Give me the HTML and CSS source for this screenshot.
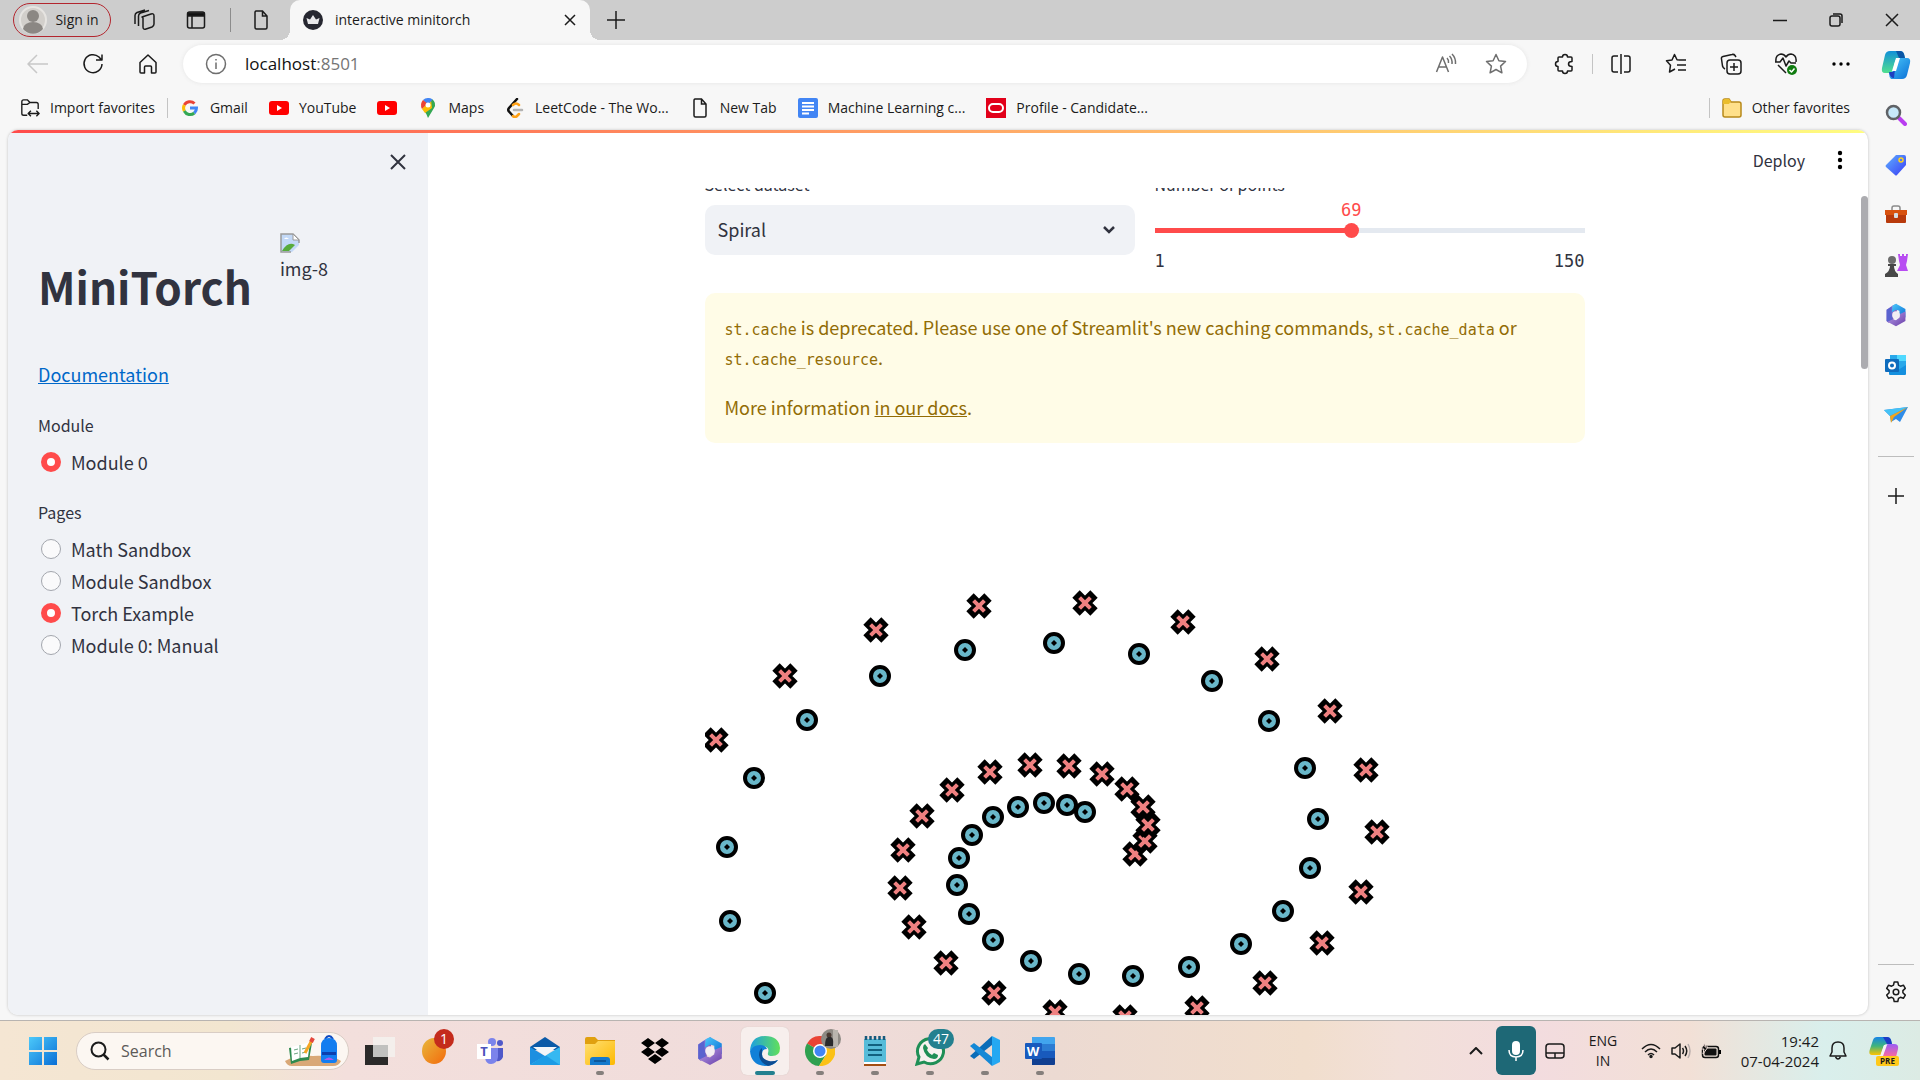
FILE: index.html
```html
<!DOCTYPE html>
<html lang="en">
<head>
<meta charset="utf-8">
<title>interactive minitorch</title>
<link rel="stylesheet" href="styles.css">
</head>
<body>
<svg class="defs" aria-hidden="true">
  <defs>
    <linearGradient id="gBlue" x1="0" y1="0" x2="1" y2="1"><stop offset="0" stop-color="#4cc9fa"/><stop offset="1" stop-color="#0a6fd6"/></linearGradient>
    <linearGradient id="gTag" x1="0" y1="0" x2="1" y2="1"><stop offset="0" stop-color="#5fb0ff"/><stop offset="1" stop-color="#3a3df5"/></linearGradient>
    <linearGradient id="gTeal" x1="0" y1="0" x2="0" y2="1"><stop offset="0" stop-color="#1190d8"/><stop offset="1" stop-color="#52e08f"/></linearGradient>
    <linearGradient id="gPurple" x1="0" y1="0" x2="1" y2="1"><stop offset="0" stop-color="#b9a2ee"/><stop offset="1" stop-color="#6a3fa8"/></linearGradient>
    <linearGradient id="gEdge" x1="0" y1="0" x2="1" y2="0"><stop offset="0" stop-color="#1c9fe0"/><stop offset="1" stop-color="#62e05a"/></linearGradient>
    <linearGradient id="gFolder" x1="0" y1="0" x2="1" y2="1"><stop offset="0" stop-color="#ffdf73"/><stop offset="1" stop-color="#fdb900"/></linearGradient>
    <linearGradient id="gOrange" x1="0" y1="0" x2="1" y2="1"><stop offset="0" stop-color="#e8b83c"/><stop offset="1" stop-color="#f36a0c"/></linearGradient>
    <linearGradient id="gPink" x1="0" y1="0" x2="0" y2="1"><stop offset="0" stop-color="#9a5cf5"/><stop offset="1" stop-color="#ff6a9a"/></linearGradient>
    <linearGradient id="gRainbow" x1="0" y1="0" x2="0" y2="1"><stop offset="0" stop-color="#1583e8"/><stop offset=".5" stop-color="#3fb47c"/><stop offset="1" stop-color="#ffc400"/></linearGradient>
    <symbol id="page" viewBox="0 0 20 20"><path d="M5 1h6.500l4.500 5v11.500a1.500 1.500 0 0 1-1.500 1.500h-9A1.500 1.500 0 0 1 4 17.500v-15A1.500 1.500 0 0 1 5 1zM11.500 1v5H16" fill="none" stroke="#1b1b1b" stroke-width="1.500"/></symbol>
    <symbol id="yt" viewBox="0 0 20 20"><rect y="3" width="20" height="14" rx="3" fill="#f00"/><path d="M8 7l5 3-5 3z" fill="#fff"/></symbol>
    <symbol id="m365" viewBox="0 0 28 28"><path d="M10 3l5-2v9l-4 3v8l-6 2-2-2V8z" fill="url(#gPurple)"/><path d="M14 1l11 6v10l-7-4V9l-4-1-5 3 1-8z" fill="url(#gBlue)"/><path d="M25 15v6l-11 6-10-5 6-3 4 1 4-3v-4l7-3z" fill="url(#gPurple)"/><path d="M3 8l6-4v8l1 7-6 3-1-1z" fill="#5a63cf"/><circle cx="14" cy="14" r="4.500" fill="#f3eef3"/></symbol>
  </defs>
</svg>

<header class="tabstrip">
  <button class="signin"><svg width="28" height="28" viewBox="0 0 28 28"><circle cx="14" cy="14" r="13" fill="#d2cfcb" stroke="#e6e4e1" stroke-width="2"/><circle cx="14" cy="10" r="6" fill="#8b8783"/><path d="M4 23a10 7 0 0 1 20 0 13 13 0 0 1-20 0z" fill="#8b8783"/></svg>Sign in</button>
  <button class="strip-btn" aria-label="Workspaces"><svg class="ico" width="22" height="22" viewBox="0 0 22 22"><path d="M9 8l9-3q3-1 3 2v8q0 2-2 3l-6 2q-3 1-3-2V9zM5.500 17V7q0-2 2-3L16 1.500M2 15V6.500q0-2 2-3L12 1" /></svg></button>
  <button class="strip-btn" aria-label="Tab actions"><svg class="ico" width="20" height="20" viewBox="0 0 20 20"><rect x="1.500" y="2" width="17" height="16" rx="2"/><path d="M2 3h16v3H2z" fill="#111"/><path d="M6 6v12"/></svg></button>
  <span class="vline strip-sep"></span>
  <button class="strip-btn page-tab" aria-label="New Tab page"><svg width="20" height="22"><use href="#page"/></svg></button>
  <div class="tab">
    <svg width="22" height="22" viewBox="0 0 22 22"><circle cx="11" cy="11" r="10" fill="#262730"/><path d="M4.500 9l3.500 1.500L11 6l3 4.500L17.500 9 16 15H6z" fill="#e8e8ea"/></svg>
    <span class="tab-title">interactive minitorch</span>
    <button aria-label="Close tab"><svg class="ico" width="12" height="12" viewBox="0 0 12 12"><path d="M1 1l10 10M11 1L1 11"/></svg></button>
  </div>
  <button class="strip-btn" aria-label="New tab"><svg class="ico" width="18" height="18" viewBox="0 0 18 18"><path d="M9 0v18M0 9h18"/></svg></button>
  <div class="window-btns">
    <button aria-label="Minimize"><svg class="ico" width="14" height="14" viewBox="0 0 14 14"><path d="M0 7.500h14"/></svg></button>
    <button aria-label="Restore"><svg class="ico" width="14" height="14" viewBox="0 0 14 14"><rect x="1" y="3" width="10" height="10" rx="2"/><path d="M4 1h7q2 0 2 2v7"/></svg></button>
    <button aria-label="Close"><svg class="ico" width="14" height="14" viewBox="0 0 14 14"><path d="M1 1l12 12M13 1L1 13"/></svg></button>
  </div>
</header>

<div class="browser">
  <div class="window">
    <nav class="toolbar" aria-label="Navigation">
      <button class="tool dim" aria-label="Back"><svg class="ico" width="22" height="20" viewBox="0 0 22 20"><path d="M21 10H1M10 1l-9 9 9 9"/></svg></button>
      <button class="tool" aria-label="Refresh"><svg class="ico" width="22" height="22" viewBox="0 0 22 22"><path d="M20 11a9 9 0 1 1-3-7l2.500 3M20 1.500V7h-6"/></svg></button>
      <button class="tool" aria-label="Home"><svg class="ico" width="20" height="22" viewBox="0 0 20 22"><path d="M2 9.500L10 2l8 7.500V19q0 1-1 1h-3.500v-6q0-1-1-1h-5q-1 0-1 1v6H3q-1 0-1-1z"/></svg></button>
      <div class="address">
        <svg class="ico grey" width="22" height="22" viewBox="0 0 22 22"><circle cx="11" cy="11" r="9.500"/><path d="M11 9.500V16M11 6v1.500"/></svg>
        <label class="url"><span class="host">localhost</span>:8501<input type="text" aria-label="Address"></label>
        <button class="tool grey" aria-label="Read aloud"><svg class="ico" width="22" height="22" viewBox="0 0 22 22"><path d="M1.500 19L7.500 4l6 15M3.500 14h8M12 5q2 2 1.500 5M14.500 3q3 3 2.500 8M17 1q4 4 3.500 10"/></svg></button>
        <button class="tool grey" aria-label="Add to favorites"><svg class="ico" width="22" height="22" viewBox="0 0 22 22"><path d="M11 1.500l2.900 6.200 6.600.8-4.900 4.600 1.300 6.700L11 16.500l-5.900 3.300 1.300-6.700L1.500 8.500l6.600-.8z"/></svg></button>
      </div>
      <button class="tool" aria-label="Extensions"><svg class="ico" width="22" height="22" viewBox="0 0 22 22"><path d="M5 4h3.500q0-2.500 2.500-2.500T13.500 4H17q1 0 1 1v3.500q-3.500 0-3.500 2.500t3.500 2.500V17q0 1-1 1h-3.500q0 2.500-2.500 2.500T8.500 18H5q-1 0-1-1v-3.500q-2.500 0-2.500-2.500T4 8.500V5q0-1 1-1z"/></svg></button>
      <span class="vline"></span>
      <button class="tool" aria-label="Split screen"><svg class="ico" width="22" height="22" viewBox="0 0 22 22"><path d="M8 3H4Q2 3 2 5v12q0 2 2 2h4M14 3h4q2 0 2 2v12q0 2-2 2h-4M11 1v20"/></svg></button>
      <button class="tool" aria-label="Favorites"><svg class="ico" width="22" height="22" viewBox="0 0 22 22"><path d="M14 7l-2-.3L9.500 1.500 7 7l-5.500.8 4 4.400-1 6.800L10 16M14 7h7M12 12h9M13 17h8"/></svg></button>
      <button class="tool" aria-label="Collections"><svg class="ico" width="22" height="22" viewBox="0 0 22 22"><rect x="7" y="7" width="14" height="14" rx="3"/><path d="M14 10v8M10 14h8M5 16q-2-1-2.500-3L1.500 6q-.5-2 1.500-2.500l9-2q2-.5 3 1L16 4"/></svg></button>
      <button class="tool" aria-label="Browser essentials"><svg class="ico" width="24" height="24" viewBox="0 0 24 24"><path d="M2 10q-1-7 5-8 3 0 5 3 2-3 5-3 6 1 5 8M1 10h5l3-4 3 8 3-5 2 2h5M4 13l8 8"/><circle cx="18" cy="18" r="5" fill="#107c10" stroke="none"/><path d="M15.500 18l2 2 3-3.500" stroke="#fff"/></svg></button>
      <button class="tool" aria-label="Settings and more"><svg width="18" height="4" viewBox="0 0 18 4"><circle cx="2" cy="2" r="1.700"/><circle cx="9" cy="2" r="1.700"/><circle cx="16" cy="2" r="1.700"/></svg></button>
    </nav>

    <nav class="favorites" aria-label="Favorites bar">
      <button><svg class="ico" width="20" height="22" viewBox="0 0 22 22"><path d="M8 19H4q-2 0-2-2V4q0-2 2-2h4l3 3h7q2 0 2 2v5M2 7h6l3-2M9 17h12M12 14l-3 3 3 3M18 14l3 3-3 3"/></svg>Import favorites</button>
      <span class="vline"></span>
      <a href="#"><svg width="20" height="20" viewBox="0 0 20 20"><g fill="none" stroke-width="3"><path d="M14.500 5.500A6.500 6.500 0 0 0 4.300 7" stroke="#ea4335"/><path d="M4.300 7a6.500 6.500 0 0 0 0 6" stroke="#fbbc05"/><path d="M4.300 13a6.500 6.500 0 0 0 10 2" stroke="#34a853"/><path d="M14.300 15a6.500 6.500 0 0 0 2.200-5H10" stroke="#4285f4"/></g></svg>Gmail</a>
      <a href="#"><svg width="20" height="20"><use href="#yt"/></svg>YouTube</a>
      <a href="#" aria-label="YouTube"><svg width="20" height="20"><use href="#yt"/></svg></a>
      <a href="#"><svg width="20" height="20" viewBox="0 0 20 20"><path d="M10 0a7 7 0 0 0-5 2l5 5 4-6z" fill="#4285f4"/><path d="M5 2Q1.500 6 4 11l6-5z" fill="#ea4335"/><path d="M14 1q5 4 2 9L10 20q-1-4-4-7z" fill="#34a853"/><path d="M4 11l9-9 1 8-7 5z" fill="#fbbc04"/><path d="M10 0q3 0 4.500 1.500L10 7z" fill="#4285f4"/><circle cx="10" cy="7" r="2.500" fill="#fff"/></svg>Maps</a>
      <a href="#"><svg width="20" height="20" viewBox="0 0 20 20" fill="none" stroke-width="2.500" stroke-linecap="round"><path d="M12 1L4 10q-1.500 2 0 3.500L8 18" stroke="#111"/><path d="M8 18q2 2 4 0l2-2M8 7q3-3 6 0" stroke="#ffa116"/><path d="M9 12h8" stroke="#b3b3b3"/></svg>LeetCode - The Wo...</a>
      <a href="#"><svg width="20" height="20"><use href="#page"/></svg>New Tab</a>
      <a href="#"><svg width="20" height="20" viewBox="0 0 20 20"><rect width="20" height="20" rx="2" fill="#4285f4"/><path d="M4 5h12M4 8.500h12M4 12h12M4 15.500h7" stroke="#fff" stroke-width="2"/></svg>Machine Learning c...</a>
      <a href="#"><svg width="20" height="20" viewBox="0 0 20 20"><rect width="20" height="20" fill="#e2001a"/><rect x="3" y="6" width="14" height="8" rx="4" fill="none" stroke="#fff" stroke-width="2"/></svg>Profile - Candidate...</a>
      <span class="vline push"></span>
      <button><svg width="20" height="20" viewBox="0 0 20 20"><path d="M1 5V3q0-2 2-2h4l2 3h8q2 0 2 2v11q0 2-2 2H3q-2 0-2-2z" fill="#ffe08a" stroke="#b8891a" stroke-width="1.500"/><path d="M1 5V3q0-2 2-2h4l2 2-2 3H1z" fill="#eabd2c"/></svg>Other favorites</button>
    </nav>

    <div class="frame">
      <div class="decoration"></div>
      <div class="app">
        <aside class="sidebar">
          <div class="sidebar-head"><button aria-label="Close sidebar"><svg class="ico" width="16" height="16" viewBox="0 0 16 16"><path d="M1 1l14 14M15 1L1 15" stroke-width="2"/></svg></button></div>
          <div class="brand">
            <h1>MiniTorch</h1>
            <figure>
              <svg width="20" height="20" viewBox="0 0 20 20"><path d="M1 1h12l6 6v12H1z" fill="#c3d9f7"/><path d="M2 18q6-10 13-6l-6 6z" fill="#57ab3b"/><path d="M4 6q2-3 5 0z" fill="#fff"/><path d="M11 20l9-9v9z" fill="#f0f2f6"/><path d="M19 10V7l-6-6H1v18h10" fill="none" stroke="#9a9a9a" stroke-width="1.500"/><path d="M13 1v6h6z" fill="#fff" stroke="#9a9a9a"/></svg>
              <figcaption>img-8</figcaption>
            </figure>
          </div>
          <a class="docs" href="#">Documentation</a>
          <fieldset>
            <legend>Module</legend>
            <label><input type="radio" name="module" checked>Module 0</label>
          </fieldset>
          <fieldset>
            <legend>Pages</legend>
            <label><input type="radio" name="page">Math Sandbox</label>
            <label><input type="radio" name="page">Module Sandbox</label>
            <label><input type="radio" name="page" checked>Torch Example</label>
            <label><input type="radio" name="page">Module 0: Manual</label>
          </fieldset>
        </aside>

        <div class="view">
          <header class="app-head">
            <button>Deploy</button>
            <button aria-label="Main menu"><svg width="6" height="20" viewBox="0 0 6 20"><circle cx="3" cy="3" r="2.200"/><circle cx="3" cy="10" r="2.200"/><circle cx="3" cy="17" r="2.200"/></svg></button>
          </header>
          <div class="scroller">
            <main>
              <div class="controls">
                <div>
                  <label class="field-label" for="dataset">Select dataset</label>
                  <div class="select">
                    <select id="dataset"><option>Spiral</option></select>
                    <svg class="chev" width="14" height="10" viewBox="0 0 14 10"><path d="M2 2l5 5 5-5"/></svg>
                  </div>
                </div>
                <div>
                  <label class="field-label" for="points">Number of points</label>
                  <div class="slider">
                    <output for="points" style="left: 46%">69</output>
                    <input id="points" type="range" min="1" max="150" value="69">
                  </div>
                  <div class="limits"><span>1</span><span>150</span></div>
                </div>
              </div>
              <div class="alert" role="alert">
                <p><code>st.cache</code> is deprecated. Please use one of Streamlit's new caching commands, <code>st.cache_data</code> or <code>st.cache_resource</code>.</p>
                <p>More information <a href="#">in our docs</a>.</p>
              </div>
              <svg class="plot" role="img" aria-label="Spiral dataset">
                <defs>
                  <marker id="dot" class="mark" markerUnits="userSpaceOnUse" markerWidth="26" markerHeight="26"><circle r="9" fill="#69b7c9" stroke="#000" stroke-width="4"/><path d="M-3 0l3-3 3 3-3 3z"/></marker>
                  <marker id="cross" class="mark" markerUnits="userSpaceOnUse" markerWidth="26" markerHeight="26"><path d="M-9-9L9 9M9-9L-9 9" stroke="#000" stroke-width="10.400"/><path d="M-5.400-5.400l10.800 10.800M5.400-5.400L-5.400 5.400" stroke="#ef8080" stroke-width="4"/></marker>
                </defs>
                <polyline class="dots" points="380,352 362,345 339,343 313,347 288,357 267,375 254,398 252,425 264,454 288,480 326,501 374,514 428,516 484,507 536,484 578,451 605,408 613,359 600,308 564,261 507,221 434,194 349,183 260,190 175,216 102,260 49,318 22,387 25,461 60,533"/>
                <polyline class="crosses" points="430,394 440,381 443,365 438,347 422,329 397,314 364,306 325,305 285,312 247,330 217,356 198,390 195,428 209,467 241,503 289,533 350,552 420,557 492,548 560,523 617,483 656,432 672,372 661,310 625,251 562,199 478,162 380,143 274,146 171,170 80,216 11,280"/>
              </svg>
            </main>
            <div class="thumb"></div>
          </div>
        </div>
      </div>
    </div>
  </div>

  <aside class="rail" aria-label="Edge sidebar">
    <button aria-label="Copilot"><svg width="30" height="30" viewBox="0 0 30 30"><path d="M9 1h10q3 0 4 3l1 4h-6q-3 0-4 4l-2 8q-1 3-4 3H4q-4 0-3-5L4 5q1-4 5-4z" fill="url(#gTeal)"/><path d="M15 1h4q3 0 4 3l1 4h-6z" fill="#0a56a6"/><path d="M21 29H10q-2-2-2-6 3 0 4-3l3-9q1-3 4-3h7q4 0 3 5l-3 12q-1 4-5 4z" fill="url(#gBlue)"/><path d="M8 22h4l2-3-1 9q-4 0-5-6z" fill="#1d3fc0"/><path d="M15 8h4l-4 13h-4z" fill="#fff"/></svg></button>
    <button aria-label="Search"><svg width="22" height="22" viewBox="0 0 22 22"><path d="M14 14l6 6" stroke="#b93df0" stroke-width="4" stroke-linecap="round"/><circle cx="8.500" cy="8.500" r="6.500" fill="#c6e8fa" stroke="#5f6266" stroke-width="2.500"/></svg></button>
    <button aria-label="Shopping"><svg width="22" height="22" viewBox="0 0 22 22"><path d="M11 1l8 0q2 0 2 2v8L12 21q-1 1-2 0l-9-8q-1-1 0-2z" fill="url(#gTag)"/><circle cx="16" cy="6" r="2" fill="none" stroke="#ffd21e" stroke-width="1.500"/></svg></button>
    <button aria-label="Tools"><svg width="24" height="20" viewBox="0 0 24 20"><path d="M8 5V3q0-2 2-2h4q2 0 2 2v2" fill="none" stroke="#8b8b8b" stroke-width="1.500"/><path d="M1 5h22v5H1z" fill="#d8520f"/><path d="M2 10h20v7q0 1-1 1H3q-1 0-1-1z" fill="#b83a0c"/><rect x="10" y="8" width="4" height="5" rx="1" fill="#d6dde3"/></svg></button>
    <button aria-label="Games"><svg width="24" height="24" viewBox="0 0 24 24"><path d="M14 1h2v2h2V1h2v2h2V1h2l-1 7-1 4 2 6H13l3-6-1-4z" fill="#b84df2"/><circle cx="8" cy="7" r="4" fill="#6c6c6c"/><path d="M4 11h8v2h-2q0 5 4 8v3H1v-3q5-3 5-8H4z" fill="#484848"/></svg></button>
    <button aria-label="Microsoft 365"><svg width="24" height="24"><use href="#m365"/></svg></button>
    <button aria-label="Outlook"><svg width="22" height="22" viewBox="0 0 22 22"><path d="M5 1h15q1 0 1 1v11L5 21z" fill="#28a8ea"/><path d="M12 1h9v6h-9z" fill="#50d9ff"/><path d="M4 12l9 4 8-5v9q0 1-1 1H5q-1 0-1-1z" fill="#1490df"/><rect y="5" width="14" height="13" rx="1" fill="#0f6cbd"/><circle cx="7" cy="11.500" r="3" fill="none" stroke="#fff" stroke-width="2"/></svg></button>
    <button aria-label="Drop"><svg width="24" height="18" viewBox="0 0 24 18"><path d="M0 4l24-3-8 15-4-3-5 3-1-6z" fill="#2f8ce8"/><path d="M0 4l24-3L6 10z" fill="#45c2f5"/><path d="M6 10l18-9L10 11l-3 6z" fill="#f2a51d"/></svg></button>
    <span class="hline"></span>
    <button aria-label="Customize"><svg class="ico" width="16" height="16" viewBox="0 0 16 16"><path d="M8 0v16M0 8h16"/></svg></button>
    <span class="hline low"></span>
    <button aria-label="Sidebar settings"><svg class="ico" width="22" height="22" viewBox="0 0 22 22"><path d="M9.200 1h3.600l.7 3.100 1.900 1.100 3-1 1.900 3.200-2.400 2.200v2.200l2.400 2.300-1.900 3.200-3-1-1.900 1.100-.7 3.100H9.200l-.7-3.100-1.900-1.100-3 1-1.900-3.200 2.400-2.300V9.600L1.700 7.400l1.900-3.200 3 1 1.900-1.100z"/><circle cx="11" cy="11" r="2.800"/></svg></button>
  </aside>
</div>

<footer class="taskbar">
  <button class="start" aria-label="Start"><svg width="30" height="30" viewBox="0 0 30 30"><path d="M1 1h13v13H1zM16 1h13v13H16zM1 16h13v13H1zM16 16h13v13H16z" fill="url(#gBlue)"/></svg></button>
  <label class="search">
    <svg class="ico" width="20" height="20" viewBox="0 0 20 20"><circle cx="8.500" cy="8.500" r="7" stroke-width="2"/><path d="M13.500 13.500l5 5" stroke-width="2.500"/></svg>
    <input type="text" placeholder="Search">
    <svg width="58" height="32" viewBox="0 0 58 32"><path d="M1 26q10-6 28-5 20-1 28 5-2 5-8 5H8q-5 0-7-5z" fill="#d9a877"/><path d="M5 13l11-2 12-3-3 17-9 1-9 3z" fill="#2d8a4e"/><path d="M7 12l9-2 10-3-2 15-8 1-8 3z" fill="#fff"/><path d="M16 10v13M10 15l4-1M10 19l4-1M18 14l4-1M18 18l4-1" stroke="#6aa580"/><path d="M21 18l7-13" stroke="#f5a623" stroke-width="3"/><path d="M27 7l2-4" stroke="#e5483d" stroke-width="4"/><path d="M41 4q4-6 8 0" fill="none" stroke="#104ac0" stroke-width="2"/><path d="M37 11q0-8 8-8t8 8v14q0 3-3 3H40q-3 0-3-3z" fill="#137df0"/><path d="M38 17h14v3H38z" fill="#0d3fae"/><path d="M40 25q5-5 10 0z" fill="#a85cf0"/></svg>
  </label>
  <div class="apps">
    <button aria-label="Task view"><svg width="30" height="30" viewBox="0 0 30 30"><rect y="9" width="23" height="20" fill="#2b2a29"/><rect x="8" y="1" width="22" height="20" fill="#f4f4f2" opacity=".75"/></svg></button>
    <button aria-label="Widgets"><svg width="30" height="30" viewBox="0 0 30 30"><ellipse cx="14" cy="15" rx="12" ry="13" fill="url(#gOrange)"/></svg><span class="count red">1</span></button>
    <button aria-label="Teams"><svg width="28" height="28" viewBox="0 0 28 28"><circle cx="16" cy="5" r="4" fill="#7b83eb"/><circle cx="24" cy="6" r="3" fill="#5059c9"/><path d="M20 11h7v9q-2 5-7 4z" fill="#5059c9"/><path d="M9 11h13v9q-1 7-7 7-5 0-6-6z" fill="#7b83eb"/><rect x="1" y="7" width="14" height="15" fill="#fff"/><text x="8" y="19" class="glyph" fill="#4b53bc">T</text></svg></button>
    <button aria-label="Mail"><svg width="30" height="30" viewBox="0 0 30 30"><path d="M0 11L15 1l15 10v3H0z" fill="#0a5aa8"/><path d="M0 11l15 9L0 29z" fill="#1c8fe0"/><path d="M30 11v18H0l18-11z" fill="#35b8f1"/><path d="M15 19l15 10H0z" fill="#1d9ce5"/><path d="M3 11h24l-12 9z" fill="#f3f6f9"/></svg></button>
    <button class="open" aria-label="File Explorer"><svg width="30" height="28" viewBox="0 0 30 28"><path d="M0 2q0-2 2-2h8l3 3h17v10H0z" fill="#e0a00f"/><path d="M0 7h10l3-3h17v22q0 2-2 2H2q-2 0-2-2z" fill="url(#gFolder)"/><path d="M5 28v-5q0-3 3-3h14q3 0 3 3v5z" fill="#1479cc"/><path d="M9 24h12" stroke="#0a4d8c" stroke-width="1.500"/></svg></button>
    <button aria-label="Dropbox"><svg width="30" height="26" viewBox="0 0 30 26"><path d="M8 0l7 5-7 5-7-5zM22 0l7 5-7 5-7-5zM8 9l7 5-7 5-7-5zM22 9l7 5-7 5-7-5zM15 16l7 5-7 5-7-5z"/></svg></button>
    <button aria-label="Microsoft 365"><svg width="30" height="30"><use href="#m365"/></svg></button>
    <button class="open active" aria-label="Microsoft Edge"><svg width="30" height="30" viewBox="0 0 30 30"><path d="M0 15Q1 0 15 0q14 0 15 12 0 8-8 8-5 0-4-3 2-6-5-7-9 0-13 5z" fill="url(#gEdge)"/><path d="M0 15q3-6 10-6 6 0 7 4-5 0-5 5 0 8 8 8 4 0 8-2-4 6-13 6Q1 29 0 15z" fill="#1180d8"/><path d="M12 12q-3 2-3 7 1 8 9 11 6-1 10-6-5 2-9 1-8-2-7-8z" fill="#0c4c92"/></svg></button>
    <button class="open" aria-label="Google Chrome"><svg width="30" height="30" viewBox="0 0 30 30"><path d="M15 15L2 7.500A15 15 0 0 1 28 7.500L28 9H15z" fill="#ea4335"/><path d="M15 15L2 7.500a15 15 0 0 0 12 22.500l7-11z" fill="#2fa04f"/><path d="M15 8h13.500A15 15 0 0 1 14 30l7-11z" fill="#fbc116"/><circle cx="15" cy="15" r="7" fill="#fff"/><circle cx="15" cy="15" r="5.500" fill="#4285f4"/></svg><svg class="profile" width="20" height="20" viewBox="0 0 20 20"><circle cx="10" cy="10" r="10" fill="#8e8a84"/><path d="M12 1h5v17h-5z" fill="#b9b5ae"/><circle cx="8" cy="6" r="2.500" fill="#4a3a33"/><path d="M4 17q0-8 3-9h3q3 1 2 9z" fill="#2a2a2c"/></svg></button>
    <button class="open" aria-label="Notepad"><svg width="24" height="30" viewBox="0 0 24 30"><rect x="1" y="3" width="22" height="24" fill="#56bcd9"/><path d="M3 0v4M7.500 0v4M12 0v4M16.500 0v4M21 0v4" stroke="#175a7c" stroke-width="2.500"/><path d="M5 9h14M5 14h14M5 19h14" stroke="#12617f" stroke-width="2"/><path d="M1 26h22v2H1z" fill="#fff"/><path d="M1 28h22v2H1z" fill="#a34e12"/></svg></button>
    <button class="open" aria-label="WhatsApp"><svg width="30" height="30" viewBox="0 0 30 30"><path d="M2 28l2-7a13 12.500 0 1 1 5 5z" fill="#f7f2ef" stroke="#1f8f56" stroke-width="3"/><path d="M10 8l3 4-1 2q2 4 5 5l2-2 4 2q0 4-4 4-9-1-11-11 0-3 2-4z" fill="#1f8f56"/></svg><span class="count teal">47</span></button>
    <button class="open" aria-label="Visual Studio Code"><svg width="30" height="30" viewBox="0 0 30 30"><path d="M22 0l8 4v22l-8 4z" fill="#25a8f2"/><path d="M22 0v9L4 23l-4-3z" fill="#0a6cb8"/><path d="M22 30v-9L4 7l-4 3z" fill="#1488d6"/></svg></button>
    <button class="open" aria-label="Word"><svg width="30" height="28" viewBox="0 0 30 28"><path d="M7 0h22q1 0 1 1v6H7z" fill="#41a5ee"/><path d="M7 7h23v7H7z" fill="#2b7cd3"/><path d="M7 14h23v7H7z" fill="#185abd"/><path d="M7 21h23v6q0 1-1 1H7z" fill="#103f91"/><rect y="6" width="17" height="16" rx="1" fill="#185abd"/><text x="8" y="19" class="glyph" fill="#fff">W</text></svg></button>
  </div>
  <div class="tray">
    <button aria-label="Hidden icons"><svg class="ico" width="14" height="8" viewBox="0 0 14 8"><path d="M1 7l6-6 6 6" stroke-width="2"/></svg></button>
    <button class="mic" aria-label="Microphone"><svg width="16" height="22" viewBox="0 0 16 22"><rect x="4" y="1" width="8" height="14" rx="4" fill="#fff"/><path d="M1 10q0 7 7 7t7-7M8 17v4" fill="none" stroke="#fff" stroke-width="1.500"/></svg></button>
    <button aria-label="Touchpad"><svg class="ico" width="20" height="16" viewBox="0 0 20 16"><rect x="1" y="1" width="18" height="14" rx="3"/><path d="M1 10h18M10 10v5"/></svg></button>
    <button class="lang">ENG<br>IN</button>
    <button class="status" aria-label="Network, sound and battery">
      <svg class="ico" width="20" height="16" viewBox="0 0 20 16"><path d="M1 6q9-9 18 0M4 9q6-6 12 0M7 12q3-3 6 0"/><circle cx="10" cy="13.500" r="1" fill="#111"/></svg>
      <svg class="ico" width="20" height="16" viewBox="0 0 20 16"><path d="M1 5h3l5-4v14l-5-4H1zM11.500 5q2 3 0 6M14 3q3.500 5 0 10"/><path d="M17 1q4 7 0 14" stroke="#b9aeac"/></svg>
      <svg width="20" height="16" viewBox="0 0 20 16"><rect x="1.500" y="3.500" width="16" height="11" rx="2.500" fill="none" stroke="#111" stroke-width="1.500"/><rect x="3.500" y="5.500" width="12" height="7" rx="1" fill="#111"/><path d="M18 7h2v4h-2z"/><path d="M4 0L0 6h3l-1 5 5-7H4z" fill="#111" stroke="#f1dfd9"/></svg>
    </button>
    <button class="clock">19:42<br>07-04-2024</button>
    <button aria-label="Notifications"><svg class="ico" width="18" height="20" viewBox="0 0 18 20"><path d="M1 15l2-4V7q0-6 6-6t6 6v4l2 4zM6.500 16q2.500 4 5 0"/></svg></button>
    <button class="pre" aria-label="Copilot preview"><svg width="30" height="30" viewBox="0 0 30 30"><path d="M8 1h10q3 0 4 3l1 4h-5q-3 0-4 4l-2 7H3q-4 0-2-6L4 4q1-3 4-3z" fill="url(#gRainbow)"/><path d="M14 1h4q3 0 4 3l1 4h-5z" fill="#1d3bc6"/><path d="M20 8h5q5 0 4 5l-2 8H12l4-10q1-3 4-3z" fill="url(#gPink)"/><path d="M15 9h3l-4 11h-3z" fill="#f6f4f2"/></svg><span>PRE</span></button>
  </div>
</footer>
</body>
</html>
```
FILE: styles.css
```css
:root {
  --ui: "Open Sans", "Noto Sans", sans-serif;
  --app: "Noto Sans CJK SC", "Noto Sans", sans-serif;
  --mono: "DejaVu Sans Mono", monospace;
  --ink: #31333f;
  --red: #ff4b4b;
  --chrome: #f7f7f7;
}

* { box-sizing: border-box; }

body {
  margin: 0;
  height: 100vh;
  display: flex;
  flex-direction: column;
  overflow: hidden;
  background: var(--chrome);
  color: #1b1b1b;
  font: 14px/20px var(--ui);
}

button, input, select {
  font: inherit;
  color: inherit;
  background: none;
  border: 0;
  padding: 0;
  margin: 0;
}

button {
  display: flex;
  align-items: center;
  justify-content: center;
}

svg { flex: none; display: block; }
.defs { position: absolute; width: 0; height: 0; }
.ico { fill: none; stroke: currentColor; stroke-width: 1.5; stroke-linejoin: round; }
.grey { color: #6e6e6e; }
.dim { color: #c8c8c8; }
.vline { width: 1px; height: 20px; background: #c4c4c4; }

/* Tab strip */
.tabstrip {
  display: flex;
  align-items: center;
  height: 40px;
  flex: none;
  padding-left: 13px;
  background: #cdcdcd;
}
.signin {
  width: 98px;
  height: 34px;
  gap: 8px;
  margin-right: 7px;
  padding-right: 6px;
  border: 1px solid #b3262e;
  border-radius: 17px;
}
.strip-btn { width: 52px; height: 40px; }
.strip-sep { height: 24px; margin-left: 8px; background: #8c8c8c; }
.page-tab { margin-left: 4px; }
.tab {
  position: relative;
  display: flex;
  align-items: center;
  gap: 11px;
  width: 300px;
  height: 40px;
  margin-left: 3px;
  padding: 0 14px 0 12px;
  border-radius: 10px 10px 0 0;
  background: var(--chrome);
}
.tab::before, .tab::after {
  content: "";
  position: absolute;
  bottom: 0;
  width: 10px;
  height: 10px;
}
.tab::before { right: 100%; background: radial-gradient(circle at 0 0, transparent 10px, var(--chrome) 10px); }
.tab::after { left: 100%; background: radial-gradient(circle at 100% 0, transparent 10px, var(--chrome) 10px); }
.tab-title { flex: 1; }
.window-btns { display: flex; margin-left: auto; }
.window-btns button { width: 56px; height: 40px; }

/* Browser area */
.browser { display: flex; flex: 1; min-height: 0; }
.window { display: flex; flex-direction: column; flex: 1; min-width: 0; }
.toolbar {
  display: flex;
  align-items: center;
  height: 48px;
  flex: none;
  padding-left: 10px;
}
.tool { width: 55px; height: 36px; }
.address {
  display: flex;
  align-items: center;
  flex: 1;
  height: 38px;
  margin: 0 10px 0 8px;
  padding: 0 6px 0 22px;
  gap: 18px;
  border-radius: 19px;
  background: #fff;
  box-shadow: 0 0 4px #e4e4e4;
}
.address .tool { width: 50px; }
.address .tool + .tool { margin-left: -18px; }
.url {
  display: flex;
  flex: 1;
  font-size: 17px;
  color: #757575;
}
.url .host { color: #111; }
.url input { flex: 1; min-width: 0; }

.favorites {
  display: flex;
  align-items: center;
  gap: 21px;
  height: 42px;
  flex: none;
  padding: 0 18px 2px 20px;
}
.favorites a, .favorites button {
  display: flex;
  align-items: center;
  gap: 10px;
  color: inherit;
  text-decoration: none;
  white-space: nowrap;
}
.favorites .vline { margin: 0 -9px; }
.favorites .vline.push { margin-left: auto; }

.frame {
  display: flex;
  flex-direction: column;
  flex: 1;
  min-height: 0;
  margin: 0 0 5px 8px;
  overflow: hidden;
  border-radius: 10px;
  background: #fff;
  box-shadow: 0 0 3px #bdbdbd;
}
.decoration { height: 3px; flex: none; background: linear-gradient(90deg, #ff4b4b, #fffd80); }
.app {
  display: flex;
  flex: 1;
  min-height: 0;
  color: var(--ink);
  font: 18px/30px var(--app);
}

/* App sidebar */
.sidebar { width: 420px; flex: none; padding: 0 22px 0 30px; background: #f0f2f6; }
.sidebar-head { display: flex; justify-content: flex-end; align-items: center; height: 58px; }
.brand { display: flex; gap: 28px; height: 131px; margin-top: 37px; }
.brand h1 { margin: 25px 0 0; font-size: 44px; line-height: 66px; font-weight: 700; }
.brand figure { margin: 5px 0 0; }
.docs { display: block; color: #0068c9; margin-bottom: 24px; }
fieldset { margin: 0 0 22px; padding: 0; border: 0; }
legend { padding: 0; margin-bottom: 9px; font-size: 16px; line-height: 24px; }
fieldset label { display: flex; align-items: center; gap: 10px; height: 32px; padding-left: 3px; }
input[type="radio"] {
  appearance: none;
  width: 20px;
  height: 20px;
  border: 1px solid #a3a6ad;
  border-radius: 50%;
  background: #fafafb;
}
input[type="radio"]:checked { border: 6px solid var(--red); background: #fff; }

/* App main view */
.view { display: flex; flex-direction: column; flex: 1; min-width: 0; }
.app-head {
  display: flex;
  justify-content: flex-end;
  align-items: center;
  gap: 32px;
  height: 55px;
  flex: none;
  padding: 0 25px 2px 0;
  font-size: 16px;
}
.scroller { position: relative; flex: 1; min-height: 0; padding-right: 7px; overflow: hidden; }
.thumb {
  position: absolute;
  top: 8px;
  right: 0;
  width: 7px;
  height: 173px;
  border-radius: 4px;
  background: #acacb0;
}
main { width: 880px; max-width: 100%; margin: -16px auto 0; }
.controls { display: grid; grid-template-columns: 1fr 1fr; gap: 20px; margin-bottom: 22px; }
.field-label { display: block; height: 33px; font-size: 16px; line-height: 24px; }
.select { position: relative; }
.select select {
  width: 100%;
  height: 50px;
  padding: 0 13px 2px;
  appearance: none;
  border-radius: 10px;
  background: #f0f2f6;
}
.chev {
  position: absolute;
  top: 20px;
  right: 19px;
  fill: none;
  stroke: var(--ink);
  stroke-width: 2.5;
  pointer-events: none;
}
.slider { position: relative; padding: 18px 0 13px; }
.slider input {
  appearance: none;
  display: block;
  width: 100%;
  height: 15px;
  background: linear-gradient(90deg, var(--red) 46%, #e4e9f0 46%) center / 100% 5px no-repeat;
}
.slider input::-webkit-slider-thumb {
  appearance: none;
  width: 15px;
  height: 15px;
  border-radius: 50%;
  background: var(--red);
}
.slider output {
  position: absolute;
  top: -5px;
  width: 30px;
  margin-left: -16px;
  text-align: center;
  font: 17px/20px var(--mono);
  color: var(--red);
}
.limits { display: flex; justify-content: space-between; font: 17px/20px var(--mono); }
.alert {
  padding: 19px 20px 21px;
  border-radius: 10px;
  background: #fffce7;
  color: #926c05;
}
.alert p { margin: 0 0 20px; }
.alert p:last-child { margin: 0; }
.alert code { font: 15px/15px var(--mono); }
.alert a { color: inherit; }
.plot { width: 100%; height: 800px; margin-top: 17px; }
.plot polyline { fill: none; }
.mark { overflow: visible; }
.dots { marker: url(#dot); }
.crosses { marker: url(#cross); }

/* Edge rail */
.rail {
  display: flex;
  flex-direction: column;
  align-items: center;
  width: 52px;
  flex: none;
  padding: 0 0 3px 3px;
}
.rail button { width: 49px; height: 50px; flex: none; }
.hline { width: 36px; height: 1px; margin: 16px 0 14px; background: #bdbdbd; }
.hline.low { margin: auto 0 2px; }

/* Taskbar */
.taskbar {
  display: flex;
  align-items: center;
  height: 60px;
  flex: none;
  padding: 0 21px 0 28px;
  border-top: 1px solid #b8b4b1;
  background: linear-gradient(90deg, #f5e6d3, #f2e6d0 12%, #f3dfdc 18%, #f0dcdb 42%, #ecdad2 55%, #f1decd 68%, #f2e0d9 73%, #f3dcdf 80%, #f2e0d6 88%, #d9efec 95%, #dcebe4);
}
.start { margin-right: 18px; }
.search {
  display: flex;
  align-items: center;
  gap: 11px;
  width: 273px;
  height: 38px;
  padding: 0 6px 0 13px;
  border: 1px solid #d9cdc5;
  border-radius: 19px;
  background: #fcf7f2;
  font-size: 16px;
}
.search input { flex: 1; min-width: 0; }
.search input::placeholder { color: #5c5a58; opacity: 1; }
.apps { display: flex; gap: 7px; margin-left: 7px; }
.apps button { position: relative; width: 48px; height: 48px; border-radius: 6px; }
.apps .active { background: #f7efed; box-shadow: 0 0 1px #c9bdb8; }
.open::after {
  content: "";
  position: absolute;
  bottom: 0;
  width: 8px;
  height: 4px;
  border-radius: 2px;
  background: #857f7c;
}
.active::after { width: 20px; background: #23808f; }
.count {
  position: absolute;
  top: 2px;
  right: 5px;
  min-width: 20px;
  height: 20px;
  border-radius: 10px;
  color: #fff;
  text-align: center;
}
.red { background: #c42b1c; }
.teal { right: 0; min-width: 26px; background: #24808f; }
.profile { position: absolute; top: 2px; right: 3px; }
.glyph { font: bold 13px var(--ui); text-anchor: middle; }

.tray { display: flex; align-items: center; margin-left: auto; }
.mic { width: 40px; height: 49px; margin: 0 9px 0 13px; border-radius: 6px; background: #1e6876; }
.lang { width: 76px; }
.status { gap: 10px; }
.clock { width: 98px; justify-content: flex-end; text-align: right; margin-right: 10px; font-size: 15px; }
.pre { position: relative; margin-left: 22px; }
.pre span {
  position: absolute;
  right: 0;
  bottom: 0;
  width: 23px;
  border-radius: 2px;
  background: #ffc91a;
  font: bold 8px/10px var(--ui);
  text-align: center;
}
```
